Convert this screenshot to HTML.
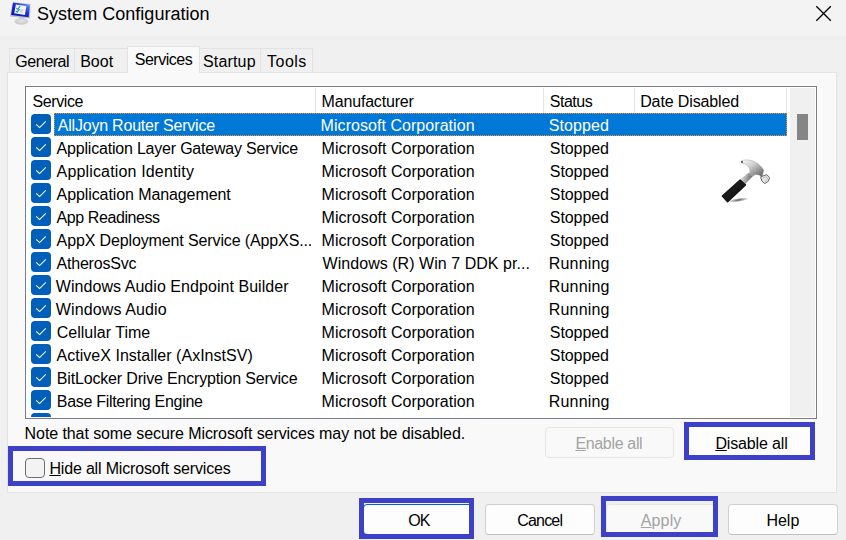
<!DOCTYPE html>
<html><head><meta charset="utf-8">
<style>
*{box-sizing:border-box;margin:0;padding:0}
html,body{width:846px;height:540px;overflow:hidden;background:#f0f0f0}
body{position:relative;font-family:"Liberation Sans",sans-serif;font-size:16px;color:#000}
.a{position:absolute}
.t{position:absolute;line-height:18px;white-space:nowrap}
u{text-decoration:underline;text-underline-offset:1px}
#title{position:absolute;left:0;top:0;width:846px;height:36px;background:#f3f3f3}
.tab{position:absolute;top:48px;height:25px;border:1px solid #e3e3e3;border-bottom:none;background:#f0f0f0}
#panel{position:absolute;left:7px;top:72px;width:830px;height:421px;background:#f9f9f9;border:1px solid #e3e3e3}
#list{position:absolute;left:25px;top:86px;width:792px;height:333px;border:1px solid #7a7d85;background:#fff}
.sep{position:absolute;top:88px;width:1px;height:25px;background:#e5e5e5}
.cb{position:absolute;left:31px;width:20px;height:20px;border-radius:4px;background:#005fb8;overflow:hidden}
.cb svg{position:absolute;left:0;top:0}
.btn{position:absolute;height:30px;border:1px solid #d0d0d0;border-radius:4px;background:#fdfdfd}
.hl{position:absolute;border:5px solid #3c41c8}
</style></head><body>
<div id="title"></div>
<svg class="a" style="left:6px;top:0" width="30" height="30" viewBox="0 0 540 540">
<defs>
<linearGradient id="scr" x1="0" y1="1" x2="1" y2="0"><stop offset="0" stop-color="#0010a0"/><stop offset="0.55" stop-color="#1a30d8"/><stop offset="0.8" stop-color="#5070f0"/><stop offset="1" stop-color="#c0d0ff"/></linearGradient>
<linearGradient id="bz" x1="0" y1="0" x2="0" y2="1"><stop offset="0" stop-color="#f0f0f0"/><stop offset="1" stop-color="#bdbdbd"/></linearGradient>
<radialGradient id="st" cx="0.5" cy="0.4" r="0.6"><stop offset="0" stop-color="#e8e8e8"/><stop offset="1" stop-color="#c4c4c4"/></radialGradient>
</defs>
<ellipse cx="275" cy="385" rx="120" ry="58" fill="url(#st)"/>
<polygon points="230,300 330,310 320,360 235,350" fill="#d0d0d0"/>
<polygon points="105,25 455,65 425,335 70,295" fill="url(#bz)"/>
<polygon points="125,45 435,82 408,312 92,272" fill="url(#scr)"/>
<polygon points="178,82 368,108 340,268 148,240" fill="#f2f4f8"/>
<path d="M192 150 L212 168 L250 112" stroke="#2a8fc8" stroke-width="20" fill="none" stroke-linecap="round"/>
<path d="M182 202 L202 218 L238 172" stroke="#2a8fc8" stroke-width="20" fill="none" stroke-linecap="round"/>
<path d="M255 178 L315 186 M250 212 L300 220" stroke="#7a8aa0" stroke-width="9"/>
<path d="M228 170 L258 172" stroke="#40c060" stroke-width="8"/>
</svg>
<svg class="a" style="left:810px;top:0" width="28" height="28"><path d="M6.3 6.3L20.8 20.8M20.8 6.3L6.3 20.8" stroke="#000" stroke-width="1.35" fill="none"/></svg>
<div class="tab" style="left:9px;width:66px"></div>
<div class="tab" style="left:74px;width:54px"></div>
<div class="tab" style="left:127px;top:46px;width:73px;height:27px;background:#f9f9f9;z-index:2"></div>
<div class="tab" style="left:199px;width:62px"></div>
<div class="tab" style="left:260px;width:53px"></div>
<div id="panel"></div>
<div id="list"></div>
<div class="sep" style="left:315px"></div>
<div class="sep" style="left:543px"></div>
<div class="sep" style="left:634px"></div>
<div class="sep" style="left:786px"></div>
<div class="a" style="left:54px;top:113px;width:733px;height:23px;background:#0078d7;border:1px dotted #ff8c1a"></div>
<div class="cb" style="top:114px"><svg width="20" height="20"><path d="M5.2 10.3L8.6 13.6L14.8 7.4" stroke="#fff" stroke-width="1.1" fill="none"/></svg></div>
<div class="cb" style="top:137px"><svg width="20" height="20"><path d="M5.2 10.3L8.6 13.6L14.8 7.4" stroke="#fff" stroke-width="1.1" fill="none"/></svg></div>
<div class="cb" style="top:160px"><svg width="20" height="20"><path d="M5.2 10.3L8.6 13.6L14.8 7.4" stroke="#fff" stroke-width="1.1" fill="none"/></svg></div>
<div class="cb" style="top:183px"><svg width="20" height="20"><path d="M5.2 10.3L8.6 13.6L14.8 7.4" stroke="#fff" stroke-width="1.1" fill="none"/></svg></div>
<div class="cb" style="top:206px"><svg width="20" height="20"><path d="M5.2 10.3L8.6 13.6L14.8 7.4" stroke="#fff" stroke-width="1.1" fill="none"/></svg></div>
<div class="cb" style="top:229px"><svg width="20" height="20"><path d="M5.2 10.3L8.6 13.6L14.8 7.4" stroke="#fff" stroke-width="1.1" fill="none"/></svg></div>
<div class="cb" style="top:252px"><svg width="20" height="20"><path d="M5.2 10.3L8.6 13.6L14.8 7.4" stroke="#fff" stroke-width="1.1" fill="none"/></svg></div>
<div class="cb" style="top:275px"><svg width="20" height="20"><path d="M5.2 10.3L8.6 13.6L14.8 7.4" stroke="#fff" stroke-width="1.1" fill="none"/></svg></div>
<div class="cb" style="top:298px"><svg width="20" height="20"><path d="M5.2 10.3L8.6 13.6L14.8 7.4" stroke="#fff" stroke-width="1.1" fill="none"/></svg></div>
<div class="cb" style="top:321px"><svg width="20" height="20"><path d="M5.2 10.3L8.6 13.6L14.8 7.4" stroke="#fff" stroke-width="1.1" fill="none"/></svg></div>
<div class="cb" style="top:344px"><svg width="20" height="20"><path d="M5.2 10.3L8.6 13.6L14.8 7.4" stroke="#fff" stroke-width="1.1" fill="none"/></svg></div>
<div class="cb" style="top:367px"><svg width="20" height="20"><path d="M5.2 10.3L8.6 13.6L14.8 7.4" stroke="#fff" stroke-width="1.1" fill="none"/></svg></div>
<div class="cb" style="top:390px"><svg width="20" height="20"><path d="M5.2 10.3L8.6 13.6L14.8 7.4" stroke="#fff" stroke-width="1.1" fill="none"/></svg></div>
<div class="a" style="left:0;top:0;width:846px;height:417px;overflow:hidden"><div class="cb" style="top:413px"><svg width="20" height="20"><path d="M5.2 10.3L8.6 13.6L14.8 7.4" stroke="#fff" stroke-width="1.1" fill="none"/></svg></div></div>
<div class="a" style="left:790px;top:88px;width:25px;height:329px;background:#f0f0f0"></div>
<div class="a" style="left:797px;top:114px;width:11px;height:26px;background:#858585"></div>
<svg class="a" style="left:718px;top:155px" width="54" height="54" viewBox="0 0 540 540">
<defs>
<linearGradient id="hg" x1="0" y1="0" x2="1" y2="1"><stop offset="0" stop-color="#fdfdfd"/><stop offset="0.4" stop-color="#cfcfcf"/><stop offset="0.7" stop-color="#939393"/><stop offset="1" stop-color="#5a5a5a"/></linearGradient>
<linearGradient id="ng" x1="0" y1="0" x2="1" y2="0.3"><stop offset="0" stop-color="#e8e8e8"/><stop offset="0.5" stop-color="#b0b0b0"/><stop offset="1" stop-color="#6a6a6a"/></linearGradient>
<linearGradient id="gr" x1="0" y1="0" x2="1" y2="1"><stop offset="0" stop-color="#4a4a4a"/><stop offset="0.35" stop-color="#1e1e1e"/><stop offset="1" stop-color="#080808"/></linearGradient>
<radialGradient id="sh"><stop offset="0" stop-color="#000" stop-opacity="0.65"/><stop offset="1" stop-color="#000" stop-opacity="0"/></radialGradient>
</defs>
<ellipse cx="205" cy="450" rx="105" ry="20" fill="url(#sh)" transform="rotate(-9 205 450)"/>
<path d="M228 240 L305 178 L345 215 L272 290 Z" fill="url(#ng)"/>
<path d="M44 410 L222 252 L274 298 L96 466 Z" fill="url(#gr)" stroke="#161616" stroke-width="16" stroke-linejoin="round"/>
<path d="M232 60 C285 32 395 50 458 152 L440 218 C410 192 372 182 348 214 L312 192 C332 150 312 96 242 82 Z" fill="url(#hg)" stroke="#7a7a7a" stroke-width="3"/>
<circle cx="240" cy="70" r="9" fill="#2a2a2a"/>
<path d="M426 218 L488 196 L516 226 L504 262 L468 286 L440 262 Z" fill="#e4e4e4" stroke="#6a6a6a" stroke-width="10" stroke-linejoin="round"/>
<path d="M448 232 L486 216 L498 240 L470 266" fill="none" stroke="#a8a8a8" stroke-width="6"/>
</svg>
<div class="a" style="left:25px;top:458px;width:20px;height:20px;border:1px solid #6e6e6e;border-radius:4px;background:#f3f3f3"></div>
<div class="btn" style="left:545px;top:427px;width:129px;height:31px;border-color:#e5e5e5;background:#f9f9f9"></div>
<div class="btn" style="left:687px;top:425px;width:126px;height:33px;background:#fdfdfd"></div>
<div class="btn" style="left:363px;top:504px;width:110px;height:31px;border:1px solid #0067c0;background:#fdfdfd"></div>
<div class="btn" style="left:485px;top:504px;width:110px;height:31px;border-bottom-color:#c0c0c0"></div>
<div class="btn" style="left:606px;top:504px;width:111px;height:30px;background:#f9f9f9;border-color:#e5e5e5"></div>
<div class="btn" style="left:728px;top:504px;width:110px;height:31px;border-bottom-color:#c0c0c0"></div>
<div id="ttl" class="t" style="left:37.00px;top:3.5px;font-size:18px;line-height:20px;letter-spacing:0.026px;color:#000;">System Configuration</div>
<div id="tGeneral" class="t" style="left:15.20px;top:53px;font-size:16px;line-height:18px;letter-spacing:-0.417px;color:#000;">General</div>
<div id="tBoot" class="t" style="left:80.20px;top:53px;font-size:16px;line-height:18px;letter-spacing:-0.000px;color:#000;">Boot</div>
<div id="tServices" class="t" style="left:134.80px;top:51px;font-size:16px;line-height:18px;letter-spacing:-0.500px;color:#000;z-index:3;">Services</div>
<div id="tStartup" class="t" style="left:203.00px;top:53px;font-size:16px;line-height:18px;letter-spacing:0.167px;color:#000;">Startup</div>
<div id="tTools" class="t" style="left:267.00px;top:53px;font-size:16px;line-height:18px;letter-spacing:0.500px;color:#000;">Tools</div>
<div id="hService" class="t" style="left:32.60px;top:93px;font-size:16px;line-height:18px;letter-spacing:-0.417px;color:#000;">Service</div>
<div id="hManu" class="t" style="left:321.60px;top:93px;font-size:16px;line-height:18px;letter-spacing:-0.182px;color:#000;">Manufacturer</div>
<div id="hStatus" class="t" style="left:549.80px;top:93px;font-size:16px;line-height:18px;letter-spacing:-0.500px;color:#000;">Status</div>
<div id="hDate" class="t" style="left:640.20px;top:93px;font-size:16px;line-height:18px;letter-spacing:-0.125px;color:#000;">Date Disabled</div>
<div id="r0s" class="t" style="left:57.80px;top:117px;font-size:16px;line-height:18px;letter-spacing:-0.214px;color:#fff;">AllJoyn Router Service</div>
<div id="r0m" class="t" style="left:320.60px;top:117px;font-size:16px;line-height:18px;letter-spacing:0.050px;color:#fff;">Microsoft Corporation</div>
<div id="r0t" class="t" style="left:548.80px;top:117px;font-size:16px;line-height:18px;letter-spacing:0.083px;color:#fff;">Stopped</div>
<div id="r1s" class="t" style="left:56.60px;top:140px;font-size:16px;line-height:18px;letter-spacing:-0.203px;color:#000;">Application Layer Gateway Service</div>
<div id="r1m" class="t" style="left:321.60px;top:140px;font-size:16px;line-height:18px;letter-spacing:-0.000px;color:#000;">Microsoft Corporation</div>
<div id="r1t" class="t" style="left:549.80px;top:140px;font-size:16px;line-height:18px;letter-spacing:-0.083px;color:#000;">Stopped</div>
<div id="r2s" class="t" style="left:56.60px;top:163px;font-size:16px;line-height:18px;letter-spacing:0.158px;color:#000;">Application Identity</div>
<div id="r2m" class="t" style="left:321.60px;top:163px;font-size:16px;line-height:18px;letter-spacing:-0.000px;color:#000;">Microsoft Corporation</div>
<div id="r2t" class="t" style="left:549.80px;top:163px;font-size:16px;line-height:18px;letter-spacing:-0.083px;color:#000;">Stopped</div>
<div id="r3s" class="t" style="left:56.60px;top:186px;font-size:16px;line-height:18px;letter-spacing:-0.095px;color:#000;">Application Management</div>
<div id="r3m" class="t" style="left:321.60px;top:186px;font-size:16px;line-height:18px;letter-spacing:-0.000px;color:#000;">Microsoft Corporation</div>
<div id="r3t" class="t" style="left:549.80px;top:186px;font-size:16px;line-height:18px;letter-spacing:-0.083px;color:#000;">Stopped</div>
<div id="r4s" class="t" style="left:56.60px;top:209px;font-size:16px;line-height:18px;letter-spacing:-0.417px;color:#000;">App Readiness</div>
<div id="r4m" class="t" style="left:321.60px;top:209px;font-size:16px;line-height:18px;letter-spacing:-0.000px;color:#000;">Microsoft Corporation</div>
<div id="r4t" class="t" style="left:549.80px;top:209px;font-size:16px;line-height:18px;letter-spacing:-0.083px;color:#000;">Stopped</div>
<div id="r5s" class="t" style="left:56.60px;top:232px;font-size:16px;line-height:18px;letter-spacing:-0.125px;color:#000;">AppX Deployment Service (AppXS...</div>
<div id="r5m" class="t" style="left:321.60px;top:232px;font-size:16px;line-height:18px;letter-spacing:-0.000px;color:#000;">Microsoft Corporation</div>
<div id="r5t" class="t" style="left:549.80px;top:232px;font-size:16px;line-height:18px;letter-spacing:-0.083px;color:#000;">Stopped</div>
<div id="r6s" class="t" style="left:56.60px;top:255px;font-size:16px;line-height:18px;letter-spacing:-0.222px;color:#000;">AtherosSvc</div>
<div id="r6m" class="t" style="left:322.60px;top:255px;font-size:16px;line-height:18px;letter-spacing:0.038px;color:#000;">Windows (R) Win 7 DDK pr...</div>
<div id="r6t" class="t" style="left:548.80px;top:255px;font-size:16px;line-height:18px;letter-spacing:0.167px;color:#000;">Running</div>
<div id="r7s" class="t" style="left:55.80px;top:278px;font-size:16px;line-height:18px;letter-spacing:0.052px;color:#000;">Windows Audio Endpoint Builder</div>
<div id="r7m" class="t" style="left:321.60px;top:278px;font-size:16px;line-height:18px;letter-spacing:-0.000px;color:#000;">Microsoft Corporation</div>
<div id="r7t" class="t" style="left:548.80px;top:278px;font-size:16px;line-height:18px;letter-spacing:0.167px;color:#000;">Running</div>
<div id="r8s" class="t" style="left:55.80px;top:301px;font-size:16px;line-height:18px;letter-spacing:0.125px;color:#000;">Windows Audio</div>
<div id="r8m" class="t" style="left:321.60px;top:301px;font-size:16px;line-height:18px;letter-spacing:-0.000px;color:#000;">Microsoft Corporation</div>
<div id="r8t" class="t" style="left:548.80px;top:301px;font-size:16px;line-height:18px;letter-spacing:0.167px;color:#000;">Running</div>
<div id="r9s" class="t" style="left:56.80px;top:324px;font-size:16px;line-height:18px;letter-spacing:0.000px;color:#000;">Cellular Time</div>
<div id="r9m" class="t" style="left:321.60px;top:324px;font-size:16px;line-height:18px;letter-spacing:-0.000px;color:#000;">Microsoft Corporation</div>
<div id="r9t" class="t" style="left:549.80px;top:324px;font-size:16px;line-height:18px;letter-spacing:-0.083px;color:#000;">Stopped</div>
<div id="r10s" class="t" style="left:56.60px;top:347px;font-size:16px;line-height:18px;letter-spacing:0.019px;color:#000;">ActiveX Installer (AxInstSV)</div>
<div id="r10m" class="t" style="left:321.60px;top:347px;font-size:16px;line-height:18px;letter-spacing:-0.000px;color:#000;">Microsoft Corporation</div>
<div id="r10t" class="t" style="left:549.80px;top:347px;font-size:16px;line-height:18px;letter-spacing:-0.083px;color:#000;">Stopped</div>
<div id="r11s" class="t" style="left:56.80px;top:370px;font-size:16px;line-height:18px;letter-spacing:-0.167px;color:#000;">BitLocker Drive Encryption Service</div>
<div id="r11m" class="t" style="left:321.60px;top:370px;font-size:16px;line-height:18px;letter-spacing:-0.000px;color:#000;">Microsoft Corporation</div>
<div id="r11t" class="t" style="left:549.80px;top:370px;font-size:16px;line-height:18px;letter-spacing:-0.083px;color:#000;">Stopped</div>
<div id="r12s" class="t" style="left:56.80px;top:393px;font-size:16px;line-height:18px;letter-spacing:-0.300px;color:#000;">Base Filtering Engine</div>
<div id="r12m" class="t" style="left:321.60px;top:393px;font-size:16px;line-height:18px;letter-spacing:-0.000px;color:#000;">Microsoft Corporation</div>
<div id="r12t" class="t" style="left:548.80px;top:393px;font-size:16px;line-height:18px;letter-spacing:0.167px;color:#000;">Running</div>
<div id="note" class="t" style="left:24.60px;top:425px;font-size:16px;line-height:18px;letter-spacing:-0.083px;color:#000;">Note that some secure Microsoft services may not be disabled.</div>
<div id="hide" class="t" style="left:49.40px;top:460px;font-size:16px;line-height:18px;letter-spacing:-0.173px;color:#000;"><u>H</u>ide all Microsoft services</div>
<div id="enable" class="t" style="left:575.40px;top:435px;font-size:16px;line-height:18px;letter-spacing:-0.333px;color:#a3a3a3;"><u>E</u>nable all</div>
<div id="disable" class="t" style="left:715.40px;top:435px;font-size:16px;line-height:18px;letter-spacing:-0.150px;color:#000;"><u>D</u>isable all</div>
<div id="ok" class="t" style="left:408.20px;top:512px;font-size:16px;line-height:18px;letter-spacing:-1.000px;color:#000;">OK</div>
<div id="cancel" class="t" style="left:517.20px;top:512px;font-size:16px;line-height:18px;letter-spacing:-0.800px;color:#000;">Cancel</div>
<div id="apply" class="t" style="left:640.80px;top:512px;font-size:16px;line-height:18px;letter-spacing:0.125px;color:#a3a3a3;"><u>A</u>pply</div>
<div id="help" class="t" style="left:766.40px;top:512px;font-size:16px;line-height:18px;letter-spacing:0.000px;color:#000;">Help</div>
<div class="hl" style="left:8px;top:446px;width:258px;height:40px"></div>
<div class="hl" style="left:684px;top:422px;width:131px;height:38px"></div>
<div class="hl" style="left:359px;top:498px;width:115px;height:41px"></div>
<div class="hl" style="left:601px;top:496px;width:117px;height:41px"></div>
</body></html>
